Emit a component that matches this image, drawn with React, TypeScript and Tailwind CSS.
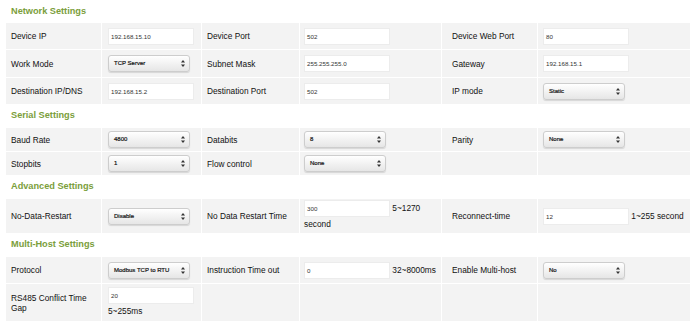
import React from 'react'

type Field =
  | { kind: 'input'; value: string; suffix?: string }
  | { kind: 'select'; value: string }
  | null

type Row = { h: string; cells: [string, Field][] }

type Section = { title: string; rows: Row[] }

const sections: Section[] = [
  {
    title: 'Network Settings',
    rows: [
      {
        h: 'h-[26px]',
        cells: [
          ['Device IP', { kind: 'input', value: '192.168.15.10' }],
          ['Device Port', { kind: 'input', value: '502' }],
          ['Device Web Port', { kind: 'input', value: '80' }],
        ],
      },
      {
        h: 'h-[27px]',
        cells: [
          ['Work Mode', { kind: 'select', value: 'TCP Server' }],
          ['Subnet Mask', { kind: 'input', value: '255.255.255.0' }],
          ['Gateway', { kind: 'input', value: '192.168.15.1' }],
        ],
      },
      {
        h: 'h-[26px]',
        cells: [
          ['Destination IP/DNS', { kind: 'input', value: '192.168.15.2' }],
          ['Destination Port', { kind: 'input', value: '502' }],
          ['IP mode', { kind: 'select', value: 'Static' }],
        ],
      },
    ],
  },
  {
    title: 'Serial Settings',
    rows: [
      {
        h: 'h-[23px]',
        cells: [
          ['Baud Rate', { kind: 'select', value: '4800' }],
          ['Databits', { kind: 'select', value: '8' }],
          ['Parity', { kind: 'select', value: 'None' }],
        ],
      },
      {
        h: 'h-[23px]',
        cells: [
          ['Stopbits', { kind: 'select', value: '1' }],
          ['Flow control', { kind: 'select', value: 'None' }],
          ['', null],
        ],
      },
    ],
  },
  {
    title: 'Advanced Settings',
    rows: [
      {
        h: 'h-[34px]',
        cells: [
          ['No-Data-Restart', { kind: 'select', value: 'Disable' }],
          ['No Data Restart Time', { kind: 'input', value: '300', suffix: '5~1270 second' }],
          ['Reconnect-time', { kind: 'input', value: '12', suffix: '1~255 second' }],
        ],
      },
    ],
  },
  {
    title: 'Multi-Host Settings',
    rows: [
      {
        h: 'h-[26px]',
        cells: [
          ['Protocol', { kind: 'select', value: 'Modbus TCP to RTU' }],
          ['Instruction Time out', { kind: 'input', value: '0', suffix: '32~8000ms' }],
          ['Enable Multi-host', { kind: 'select', value: 'No' }],
        ],
      },
      {
        h: 'h-[37px]',
        cells: [
          ['RS485 Conflict Time Gap', { kind: 'input', value: '20', suffix: '5~255ms' }],
          ['', null],
          ['', null],
        ],
      },
    ],
  },
]

// padding per column: label cells, then field cells
const labelPad = ['pl-[5px] pr-[6px]', 'pl-[5px] pr-[4px]', 'pl-[10px] pr-[4px]']
const fieldPad = ['pl-[6px]', 'pl-[4px]', 'pl-[5px]']

const SelectArrows = () => (
  <svg width="4" height="7" viewBox="0 0 4 7" className="shrink-0">
    <path d="M2 0 L4 2.6 L0 2.6 Z" fill="#333" />
    <path d="M2 7 L4 4.4 L0 4.4 Z" fill="#333" />
  </svg>
)

const FakeSelect: React.FC<{ value: string }> = ({ value }) => (
  <div className="flex h-[17px] w-[82px] items-center justify-between rounded-[3px] border border-[#cdcdcd] bg-gradient-to-b from-white to-[#e6e6e6] pl-[5px] pr-[4px] shadow-[0_1px_1px_rgba(0,0,0,0.12)]">
    <span className="text-[6px] text-[#111] [-webkit-text-stroke:0.2px_#111]">{value}</span>
    <SelectArrows />
  </div>
)

const FieldView: React.FC<{ field: Field }> = ({ field }) => {
  if (!field) return null
  if (field.kind === 'select') return <FakeSelect value={field.value} />
  return (
    <div className="text-[8.3px] leading-[15px] text-[#111]">
      <span className="inline-block h-[17px] w-[86px] border border-[#ececec] bg-white pl-[2px] align-middle text-[6.2px] leading-[15px] text-[#333]">
        {field.value}
      </span>
      {field.suffix?.split(' ').map((word, i) => (
        <React.Fragment key={i}>
          {' '}
          <span>{word}</span>
        </React.Fragment>
      ))}
    </div>
  )
}

const App: React.FC = () => {
  return (
    <div className="h-[323px] w-[690px] overflow-hidden bg-white font-['Liberation_Sans',Arial,sans-serif]">
      {sections.map((section, si) => (
        <div key={section.title}>
          <div
            className={`flex items-center pl-[11px] text-[9.2px] font-bold text-[#7b9e3b] ${si === 0 ? 'h-[23px]' : 'h-[24px]'}`}
          >
            {section.title}
          </div>
          <div className="ml-[6px] flex flex-col gap-px">
            {section.rows.map((row, ri) => (
              <div
                key={ri}
                className={`grid grid-cols-[95px_99px_97px_141px_95px_152px] gap-px ${row.h}`}
              >
                {row.cells.map(([label, field], ci) => (
                  <React.Fragment key={ci}>
                    <div
                      className={`flex items-center bg-[#f3f3f3] text-[8.3px] leading-[10px] text-[#111] ${labelPad[ci]}`}
                    >
                      {label}
                    </div>
                    <div className={`flex items-center bg-[#f3f3f3] ${fieldPad[ci]}`}>
                      <FieldView field={field} />
                    </div>
                  </React.Fragment>
                ))}
              </div>
            ))}
          </div>
        </div>
      ))}
    </div>
  )
}

export default App
